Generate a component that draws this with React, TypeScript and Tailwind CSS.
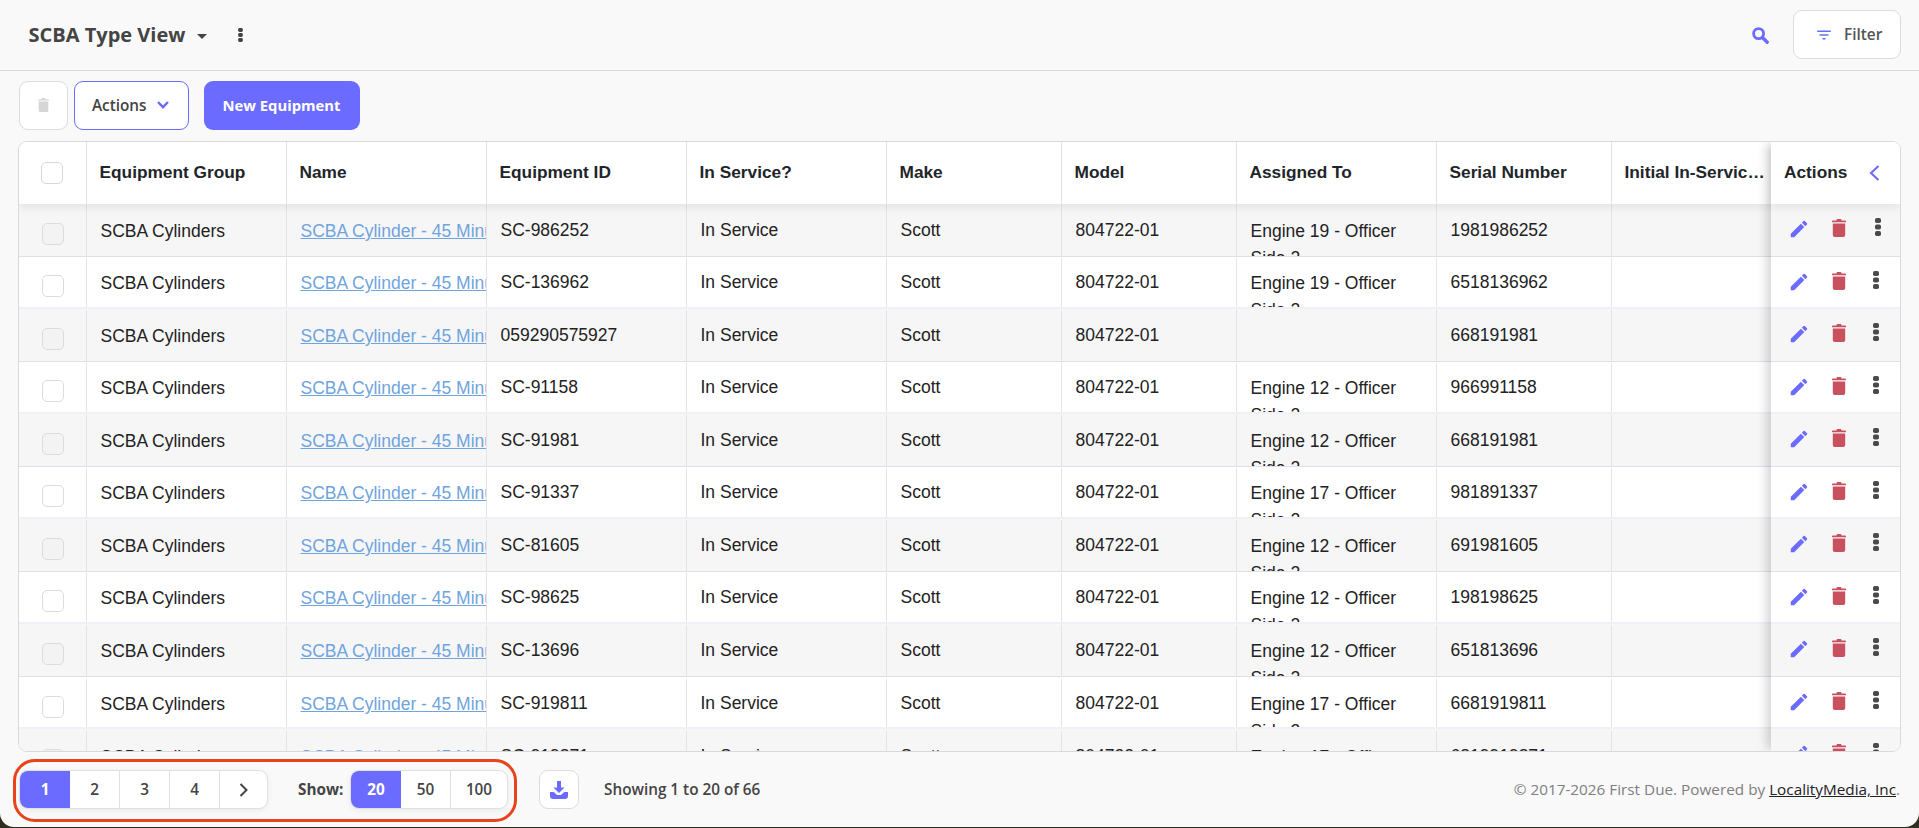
import React from "react";
import { MdFilterList, MdEdit } from "react-icons/md";

const ROWS: [string, string, string][] = [
  ["SC-986252", "Engine 19 - Officer", "1981986252"],
  ["SC-136962", "Engine 19 - Officer", "6518136962"],
  ["059290575927", "", "668191981"],
  ["SC-91158", "Engine 12 - Officer", "966991158"],
  ["SC-91981", "Engine 12 - Officer", "668191981"],
  ["SC-91337", "Engine 17 - Officer", "981891337"],
  ["SC-81605", "Engine 12 - Officer", "691981605"],
  ["SC-98625", "Engine 12 - Officer", "198198625"],
  ["SC-13696", "Engine 12 - Officer", "651813696"],
  ["SC-919811", "Engine 17 - Officer", "6681919811"],
  ["SC-919871", "Engine 17 - Officer", "6819919871"],
];

const Trash = ({ className }: { className: string }) => (
  <svg viewBox="0 0 14 18" className={className} fill="currentColor">
    <path d="M4.5 1.2 C4.5 .5 5 0 5.7 0 H8.3 C9 0 9.5 .5 9.5 1.2 V1.6 H13.2 C13.7 1.6 14 1.9 14 2.3 V3.2 H0 V2.3 C0 1.9 .3 1.6 .8 1.6 H4.5 Z" />
    <path d="M.8 4.4 H13.2 V16 C13.2 17.1 12.3 18 11.2 18 H2.8 C1.7 18 .8 17.1 .8 16 Z" />
  </svg>
);

const Dots = ({ className }: { className: string }) => (
  <svg viewBox="0 0 6 18" className={className} fill="currentColor">
    <rect x="0" y="0" width="6" height="5" rx="1.8" />
    <rect x="0" y="6.5" width="6" height="5" rx="1.8" />
    <rect x="0" y="13" width="6" height="5" rx="1.8" />
  </svg>
);

const HeadCell = ({ w, children, last }: { w: string; children: React.ReactNode; last?: boolean }) => (
  <div className={`${w} shrink-0 h-full flex items-center pl-[12.5px] pb-[1px] ${last ? "pr-0" : "pr-[4px] border-r border-[#e2e2e5]"}`}>
    <span className="truncate">{children}</span>
  </div>
);

const Cell = ({ w, children, last, extra }: { w: string; children?: React.ReactNode; last?: boolean; extra?: string }) => (
  <div className={`${w} shrink-0 h-full overflow-hidden pl-[13.5px] ${extra ?? "pt-[11.85px]"} ${last ? "" : "border-r border-[#e4e4e7]"}`}>
    {children}
  </div>
);

export default function App() {
  return (
    <div className="w-[1919px] h-[828px] bg-[#2f2e1e] overflow-hidden">
      <div className="relative w-full h-[827px] bg-[#f9f9fa] rounded-b-[14px] flex flex-col font-['Open_Sans',sans-serif] overflow-hidden">
        {/* Top bar */}
        <header className="h-[71px] shrink-0 border-b border-[#dcdcdf] flex items-center pl-[28.5px] pr-[18px]">
          <h1 className="text-[20px] font-bold text-[#444444] leading-none">SCBA Type View</h1>
          <svg viewBox="0 0 10 5" className="w-[10px] h-[5px] ml-[12px] mt-[2px] text-[#444444]" fill="currentColor">
            <path d="M0 0 H10 L5 5 Z" />
          </svg>
          <Dots className="w-[5px] h-[14px] ml-[30.5px] text-[#444444]" />
          <div className="flex-1" />
          <svg viewBox="0 0 17 17" className="w-[17px] h-[17px] mr-[24px] text-[#6b6cff]" fill="none" stroke="currentColor">
            <circle cx="6.6" cy="6.6" r="5" strokeWidth="2.8" />
            <path d="M10.5 10.5 L15.2 15.2" strokeWidth="3.4" strokeLinecap="round" />
          </svg>
          <button className="w-[108px] h-[49px] -mt-[1px] bg-white border border-[#dcdcdf] rounded-[9px] flex items-center pl-[21px] text-[#555555]">
            <MdFilterList className="w-[18px] h-[18px] text-[#6b6cff]" />
            <span className="ml-[11px] text-[15.4px] font-semibold">Filter</span>
          </button>
        </header>

        {/* Toolbar */}
        <div className="h-[70px] shrink-0 flex items-start pl-[19px] pt-[10px]">
          <button className="w-[49px] h-[49px] bg-white border border-[#dcdcdf] rounded-[9px] flex items-center justify-center">
            <Trash className="w-[11px] h-[14px] text-[#d6d6d6] -mt-[2px]" />
          </button>
          <button className="w-[115px] h-[49px] ml-[6px] bg-white border border-[#6b6cff] rounded-[9px] flex items-center pl-[17px] text-[15.3px] font-semibold text-[#444444]">
            Actions
            <svg viewBox="0 0 12 8" className="w-[12px] h-[8px] ml-[10px] mt-[-1px] text-[#6b6cff]" fill="none" stroke="currentColor" strokeWidth="2.4">
              <path d="M1 1 L6 6.2 L11 1" />
            </svg>
          </button>
          <button className="w-[156px] h-[49px] ml-[14.5px] bg-[#6b6cff] rounded-[9px] text-white text-[14.8px] font-bold">
            New Equipment
          </button>
        </div>

        {/* Table */}
        <div className="ml-[18px] w-[1883px] h-[611px] shrink-0 bg-white border border-[#d9d9dd] rounded-[9px] overflow-hidden flex font-['Liberation_Sans',sans-serif] text-[17.5px] text-[#222222]">
          <div className="flex-1 min-w-0 flex flex-col overflow-hidden">
            <div className="relative z-10 h-[62px] shrink-0 flex bg-white font-bold text-[17.3px] text-[#212529] shadow-[0_4px_8px_rgba(0,0,0,0.07)]">
              <div className="w-[68px] shrink-0 h-full border-r border-[#e2e2e5] flex items-center pl-[22px]">
                <div className="w-[22px] h-[22px] rounded-[5px] border border-[#d8d8dc] bg-white" />
              </div>
              <HeadCell w="w-[200px]">Equipment Group</HeadCell>
              <HeadCell w="w-[200px]">Name</HeadCell>
              <HeadCell w="w-[200px]">Equipment ID</HeadCell>
              <HeadCell w="w-[200px]">In Service?</HeadCell>
              <HeadCell w="w-[175px]">Make</HeadCell>
              <HeadCell w="w-[175px]">Model</HeadCell>
              <HeadCell w="w-[200px]">Assigned To</HeadCell>
              <HeadCell w="w-[175px]">Serial Number</HeadCell>
              <HeadCell w="w-[159px]" last>Initial In-Service Date</HeadCell>
            </div>
            <div className="flex-1 overflow-hidden">
              {ROWS.map((r, i) => (
                <div
                  key={i}
                  className={`h-[52.5px] flex leading-[27px] ${i >= 9 ? "pt-[2px]" : "pt-[1px]"} ${
                    i % 2 === 0
                      ? "bg-[#f6f6f7] border-b border-[#dfe0ec]"
                      : "bg-white border-b-2 border-[#f0f0f6]"
                  }`}
                >
                  <div className="w-[68px] shrink-0 h-full border-r border-[#e4e4e7] pl-[23px] pt-[17.5px]">
                    <div className={`w-[22px] h-[22px] rounded-[5px] border border-[#dcdcdf] ${i % 2 === 0 ? "bg-[#f3f3f4]" : "bg-white"}`} />
                  </div>
                  <Cell w="w-[200px]" extra="pt-[12.85px]">SCBA Cylinders</Cell>
                  <Cell w="w-[200px]" extra="pt-[12.85px] whitespace-nowrap">
                    <a className="text-[#6fa4de] underline">SCBA Cylinder - 45 Minute Type</a>
                  </Cell>
                  <Cell w="w-[200px]">{r[0]}</Cell>
                  <Cell w="w-[200px]">In Service</Cell>
                  <Cell w="w-[175px]">Scott</Cell>
                  <Cell w="w-[175px]">804722-01</Cell>
                  <Cell w="w-[200px]" extra="pt-[12.85px]">
                    {r[1] && (
                      <>
                        {r[1]}
                        <br />
                        Side 2
                      </>
                    )}
                  </Cell>
                  <Cell w="w-[175px]">{r[2]}</Cell>
                  <Cell w="w-[159px]" last />
                </div>
              ))}
            </div>
          </div>

          {/* Frozen actions column */}
          <div className="relative z-20 w-[129px] shrink-0 flex flex-col bg-white shadow-[-6px_0_10px_-2px_rgba(0,0,0,0.18)]">
            <div className="relative z-10 h-[62px] shrink-0 flex items-center bg-white pl-[13px] pb-[1px] font-bold text-[17.3px] text-[#212529] shadow-[0_4px_8px_rgba(0,0,0,0.07)]">
              Actions
              <svg viewBox="0 0 11 16" className="w-[11px] h-[16px] ml-[22px] text-[#6b6cff]" fill="none" stroke="currentColor" strokeWidth="2.1">
                <path d="M9.5 1 L2 8 L9.5 15" />
              </svg>
            </div>
            <div className="flex-1 overflow-hidden">
              {ROWS.map((_, i) => (
                <div
                  key={i}
                  className={`h-[52.5px] flex items-start pl-[19px] pt-[15px] ${
                    i % 2 === 0
                      ? "bg-[#f6f6f7] border-b border-[#dfe0ec]"
                      : "bg-white border-b-2 border-[#f0f0f6]"
                  }`}
                >
                  <MdEdit className="w-[22px] h-[22px] -ml-[2px] -mt-[1px] text-[#6b6cff]" />
                  <Trash className="w-[14px] h-[18px] ml-[22px] text-[#c9505f]" />
                  <Dots className={`w-[6px] h-[18px] ${i === 0 ? "ml-[29px]" : "ml-[27px]"} -mt-[1px] text-[#4a4a4a]`} />
                </div>
              ))}
            </div>
          </div>
        </div>

        {/* Footer */}
        <footer className="flex-1 flex items-start pl-[19px] pr-[19px] pt-[18px] text-[15.3px] text-[#444444] font-semibold">
          <div className="h-[39px] flex bg-white rounded-[9px] border border-[#e0e0e3] shadow-[0_2px_6px_rgba(0,0,0,0.06)] overflow-hidden">
            <div className="w-[50px] flex items-center justify-center bg-[#6b6cff] text-white font-bold">1</div>
            <div className="w-[50px] flex items-center justify-center border-r border-[#e0e0e3]">2</div>
            <div className="w-[50px] flex items-center justify-center border-r border-[#e0e0e3]">3</div>
            <div className="w-[50px] flex items-center justify-center border-r border-[#e0e0e3]">4</div>
            <div className="w-[47px] flex items-center justify-center">
              <svg viewBox="0 0 9 14" className="w-[9px] h-[14px]" fill="none" stroke="currentColor" strokeWidth="2">
                <path d="M1.5 1 L7.5 7 L1.5 13" />
              </svg>
            </div>
          </div>
          <span className="ml-[30px] h-[39px] flex items-center font-bold w-[52px]">Show:</span>
          <div className="h-[39px] flex bg-white rounded-[9px] border border-[#e0e0e3] shadow-[0_2px_6px_rgba(0,0,0,0.06)] overflow-hidden">
            <div className="w-[50px] flex items-center justify-center bg-[#6b6cff] text-white font-bold">20</div>
            <div className="w-[50px] flex items-center justify-center border-r border-[#e0e0e3]">50</div>
            <div className="w-[56px] flex items-center justify-center">100</div>
          </div>
          <button className="ml-[31px] w-[40px] h-[39px] bg-white border border-[#dcdcdf] rounded-[9px] flex items-center justify-center">
            <svg viewBox="0 0 18 18" className="w-[18px] h-[18px] text-[#6b6cff]" fill="currentColor">
              <path d="M7 0 H11 V6.5 H14.5 L9 12 L3.5 6.5 H7 Z" />
              <path d="M0 11 H3.8 L7 14 H11 L14.2 11 H18 V15 C18 16.7 16.7 18 15 18 H3 C1.3 18 0 16.7 0 15 Z" />
            </svg>
          </button>
          <span className="ml-[25px] h-[39px] flex items-center text-[#444444]">Showing 1 to 20 of 66</span>
          <div className="flex-1" />
          <span className="h-[39px] flex items-center font-normal text-[#808080]">
            © 2017-2026 First Due. Powered by&nbsp;<a className="text-[#222222] underline">LocalityMedia, Inc</a>.
          </span>
        </footer>

        {/* Red annotation outline */}
        <div className="absolute left-[13px] top-[759px] w-[504px] h-[63px] border-[3px] border-[#e8431a] rounded-[22px] pointer-events-none" />
      </div>
    </div>
  );
}
